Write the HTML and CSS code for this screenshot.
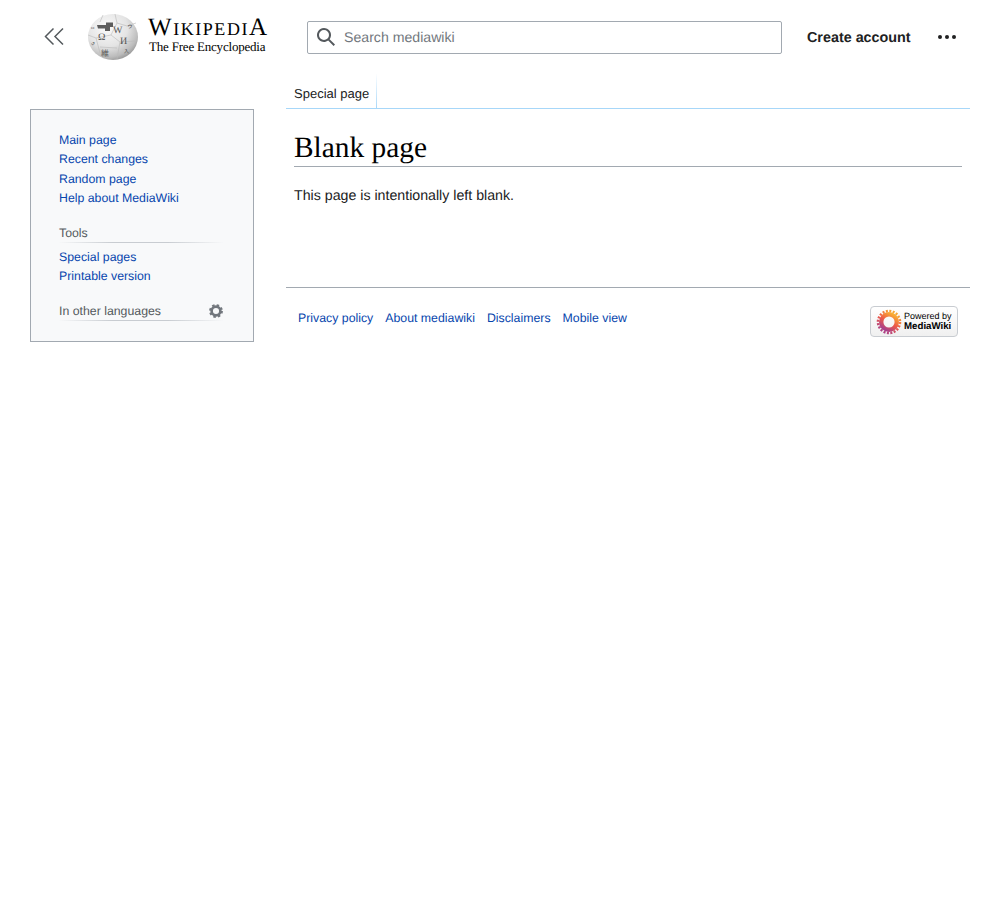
FILE: index.html
```html
<!DOCTYPE html>
<html>
<head>
<meta http-equiv="Content-Type" content="text/html; charset=utf-8"/>
<title>Blank page - mediawiki</title>
<link rel="stylesheet" href="styles.css">
</head>

<body>
<header class="header">
  <button class="collapse" aria-label="Collapse sidebar">
    <svg width="20" height="20" viewBox="0 0 20 20"><path d="M9.500 1.500 1.500 9.500 9.500 17.500M19 1.500 11 9.500 19 17.500" fill="none" stroke="#54595d" stroke-width="1.500"/></svg>
  </button>

  <a class="logo" href="#">
    <svg class="globe" width="50" height="46" viewBox="0 0 50 46">
      <defs>
        <radialGradient id="ball" cx="38%" cy="30%" r="75%">
          <stop offset="0" stop-color="#fafafa"/>
          <stop offset="0.55" stop-color="#e4e4e4"/>
          <stop offset="0.85" stop-color="#bcbcbc"/>
          <stop offset="1" stop-color="#949494"/>
        </radialGradient>
      </defs>
      <ellipse cx="25" cy="23" rx="25" ry="23" fill="url(#ball)"/>
      <path d="M9 11h9V8.500h7V13h-3v4h-5v-2.500H10z" fill="#5c5c5c"/>
      <path d="M15 1 12 8M27 0l2 9 10 3 9-3M29 9l-6 12-15 3-8-3M23 21l9 7 15-1M32 28l-3 17M8 24l4 15M12 33l17 1" fill="none" stroke="#b9b9b9" stroke-width="0.600"/>
      <g class="globe-glyphs">
        <text x="10" y="26" font-size="10">Ω</text>
        <text x="25" y="19" font-size="10">W</text>
        <text x="32" y="30" font-size="10">И</text>
        <text x="13" y="42" font-size="8">維</text>
        <text x="3" y="15" font-size="5">ω</text>
        <text x="39" y="14" font-size="6">ゥ</text>
        <text x="3" y="30" font-size="5">ي</text>
        <text x="36" y="39" font-size="5">入</text>
      </g>
    </svg>
    <span class="wordmark">
      <span class="wordmark-name">Wikipedi<span class="wordmark-cap">A</span></span>
      <span class="wordmark-tag">The Free Encyclopedia</span>
    </span>
  </a>

  <form class="search">
    <svg width="20" height="20" viewBox="0 0 20 20"><path d="M12.200 13.600a7 7 0 1 1 1.400-1.400l5.400 5.400-1.400 1.400zM3 8a5 5 0 1 0 10 0A5 5 0 0 0 3 8z" fill="#54595d"/></svg>
    <span class="search-hint">Search mediawiki</span>
  </form>

  <a class="create" href="#">Create account</a>
  <svg class="more" width="20" height="20" viewBox="0 0 20 20"><circle cx="3" cy="10" r="2" fill="#202122"/><circle cx="10" cy="10" r="2" fill="#202122"/><circle cx="17" cy="10" r="2" fill="#202122"/></svg>
</header>

<div class="page">
  <nav class="sidebar">
    <ul class="links">
      <li><a href="#">Main page</a></li>
      <li><a href="#">Recent changes</a></li>
      <li><a href="#">Random page</a></li>
      <li><a href="#">Help about MediaWiki</a></li>
    </ul>

    <h3 class="portal">Tools</h3>
    <ul class="links">
      <li><a href="#">Special pages</a></li>
      <li><a href="#">Printable version</a></li>
    </ul>

    <h3 class="portal portal-lang">
      In other languages
      <svg width="14" height="14" viewBox="0 0 16 16"><circle cx="8" cy="8" r="5" fill="none" stroke="#72777d" stroke-width="3"/><circle cx="8" cy="8" r="6.700" fill="none" stroke="#72777d" stroke-width="2.400" stroke-dasharray="2.800 2.460"/></svg>
    </h3>
  </nav>

  <main class="main">
    <div class="tabs">
      <span class="tab">Special page</span>
    </div>
    <div class="content">
      <h1>Blank page</h1>
      <p>This page is intentionally left blank.</p>
    </div>
    <footer class="footer">
      <ul class="footer-links">
        <li><a href="#">Privacy policy</a></li>
        <li><a href="#">About mediawiki</a></li>
        <li><a href="#">Disclaimers</a></li>
        <li><a href="#">Mobile view</a></li>
      </ul>
      <a class="badge" href="#">
        <svg width="26" height="26" viewBox="0 0 26 26">
          <defs>
            <linearGradient id="flower" x1="0.800" y1="0" x2="0.200" y2="1">
              <stop offset="0" stop-color="#f9b233"/>
              <stop offset="0.500" stop-color="#ee5a48"/>
              <stop offset="1" stop-color="#a43f8f"/>
            </linearGradient>
          </defs>
          <circle cx="13" cy="13" r="11" fill="none" stroke="url(#flower)" stroke-width="2.600" stroke-dasharray="2 1.455"/>
          <circle cx="13" cy="13" r="7.800" fill="none" stroke="url(#flower)" stroke-width="4.400"/>
        </svg>
        <span class="badge-text"><span>Powered by</span><b>MediaWiki</b></span>
      </a>
    </footer>
  </main>
</div>
</body>
</html>
```

FILE: styles.css
```css
html, body {
   margin: 0;
   padding: 0;
   background-color: white;
}

body {
   font-family: "Liberation Sans", Arial, sans-serif;
   color: #202122;
   text-rendering: geometricPrecision;
}

a {
   color: #0645ad;
   text-decoration: none;
}

ul {
   list-style: none;
   margin: 0;
   padding: 0;
}

/* header */
.header {
   display: flex;
   align-items: center;
   height: 74px;
}

.collapse {
   display: block;
   width: 20px;
   height: 20px;
   margin-left: 44px;
   padding: 0;
   border: none;
   background: none;
}

.logo {
   display: flex;
   align-items: flex-start;
   width: 180px;
   height: 46px;
   margin-left: 24px;
   margin-top: -1px;
   color: #000;
}

.globe {
   flex: none;
}

.globe-glyphs {
   font-family: "Liberation Serif", "Noto Sans CJK JP", serif;
   fill: #555;
}

.wordmark {
   display: flex;
   flex-direction: column;
   margin-left: 10px;
   font-family: "Liberation Serif", serif;
   white-space: nowrap;
}

.wordmark-name {
   margin-top: 1px;
   font-size: 25px;
   line-height: 25px;
   font-variant: small-caps;
   letter-spacing: 1.550px;
}

.wordmark-cap {
   font-variant: normal;
}

.wordmark-tag {
   margin-top: 0;
   margin-left: 1px;
   font-size: 13px;
   line-height: 14px;
   letter-spacing: -0.200px;
}

.search {
   display: flex;
   align-items: center;
   box-sizing: border-box;
   width: 475px;
   height: 33px;
   margin-left: 39px;
   padding-left: 8px;
   border: 1px solid #a2a9b1;
   border-radius: 2px;
}

.search-hint {
   margin-left: 8px;
   font-size: 14.130px;
   color: #72777d;
}

.create {
   margin-left: 25px;
   margin-top: 1px;
   font-size: 14.350px;
   font-weight: bold;
   color: #202122;
}

.more {
   margin-left: 26.500px;
}

/* page */
.page {
   display: grid;
   grid-template-columns: 224px 684px;
   column-gap: 32px;
   margin-left: 30px;
}

/* sidebar */
.sidebar {
   box-sizing: border-box;
   height: 233px;
   margin-top: 35px;
   padding: 20.500px 30px 0 28px;
   border: 1px solid #a2a9b1;
   background-color: #f8f9fa;
   font-size: 12.320px;
}

.links li {
   height: 19.500px;
   line-height: 19.500px;
}

.portal {
   display: flex;
   align-items: center;
   justify-content: space-between;
   height: 17px;
   margin: 14px 0 5px;
   padding-top: 2px;
   border-bottom: 1px solid transparent;
   border-image: linear-gradient(to right, rgba(200, 204, 209, 0), #c8ccd1 33%, #c8ccd1 66%, rgba(200, 204, 209, 0)) 1;
   font-size: 12.320px;
   font-weight: normal;
   color: #54595d;
}

.portal-lang {
   height: 19px;
   margin: 14.500px 0 0;
   padding-top: 0;
}

/* main */
.main {
   min-width: 0;
}

.tabs {
   display: flex;
   box-sizing: border-box;
   height: 35px;
   border-bottom: 1px solid #a7d7f9;
}

.tab {
   box-sizing: border-box;
   width: 91px;
   height: 34px;
   padding: 12px 0 0 8px;
   border-right: 1px solid transparent;
   border-image: linear-gradient(to bottom, #fff, #a7d7f9) 1;
   font-size: 13px;
   line-height: 15px;
   color: #202122;
}

.content {
   padding: 0 8px;
}

.content h1 {
   margin: 22px 0 0;
   padding-bottom: 0;
   border-bottom: 1px solid #a2a9b1;
   font-family: "Liberation Serif", serif;
   font-size: 29.400px;
   font-weight: normal;
   line-height: 35px;
   color: #000;
}

.content p {
   margin: 21px 0 0;
   font-size: 14.200px;
   line-height: 16px;
}

.footer {
   display: flex;
   justify-content: space-between;
   align-items: flex-start;
   margin-top: 83px;
   padding: 18px 12px 0;
   border-top: 1px solid #a2a9b1;
}

.footer-links {
   display: flex;
   gap: 12px;
   margin-top: 5px;
   font-size: 12.320px;
   line-height: 15px;
}

.badge {
   display: flex;
   align-items: center;
   box-sizing: border-box;
   width: 88px;
   height: 31px;
   padding-left: 5px;
   border: 1px solid #c8ccd1;
   border-radius: 4px;
   background: linear-gradient(to bottom, #fff, #f0f0f0);
   color: #000;
}

.badge-text {
   display: flex;
   flex-direction: column;
   margin-left: 2px;
   font-size: 9px;
   line-height: 10.500px;
   white-space: nowrap;
}

.badge-text b {
   font-size: 9.700px;
}
```
